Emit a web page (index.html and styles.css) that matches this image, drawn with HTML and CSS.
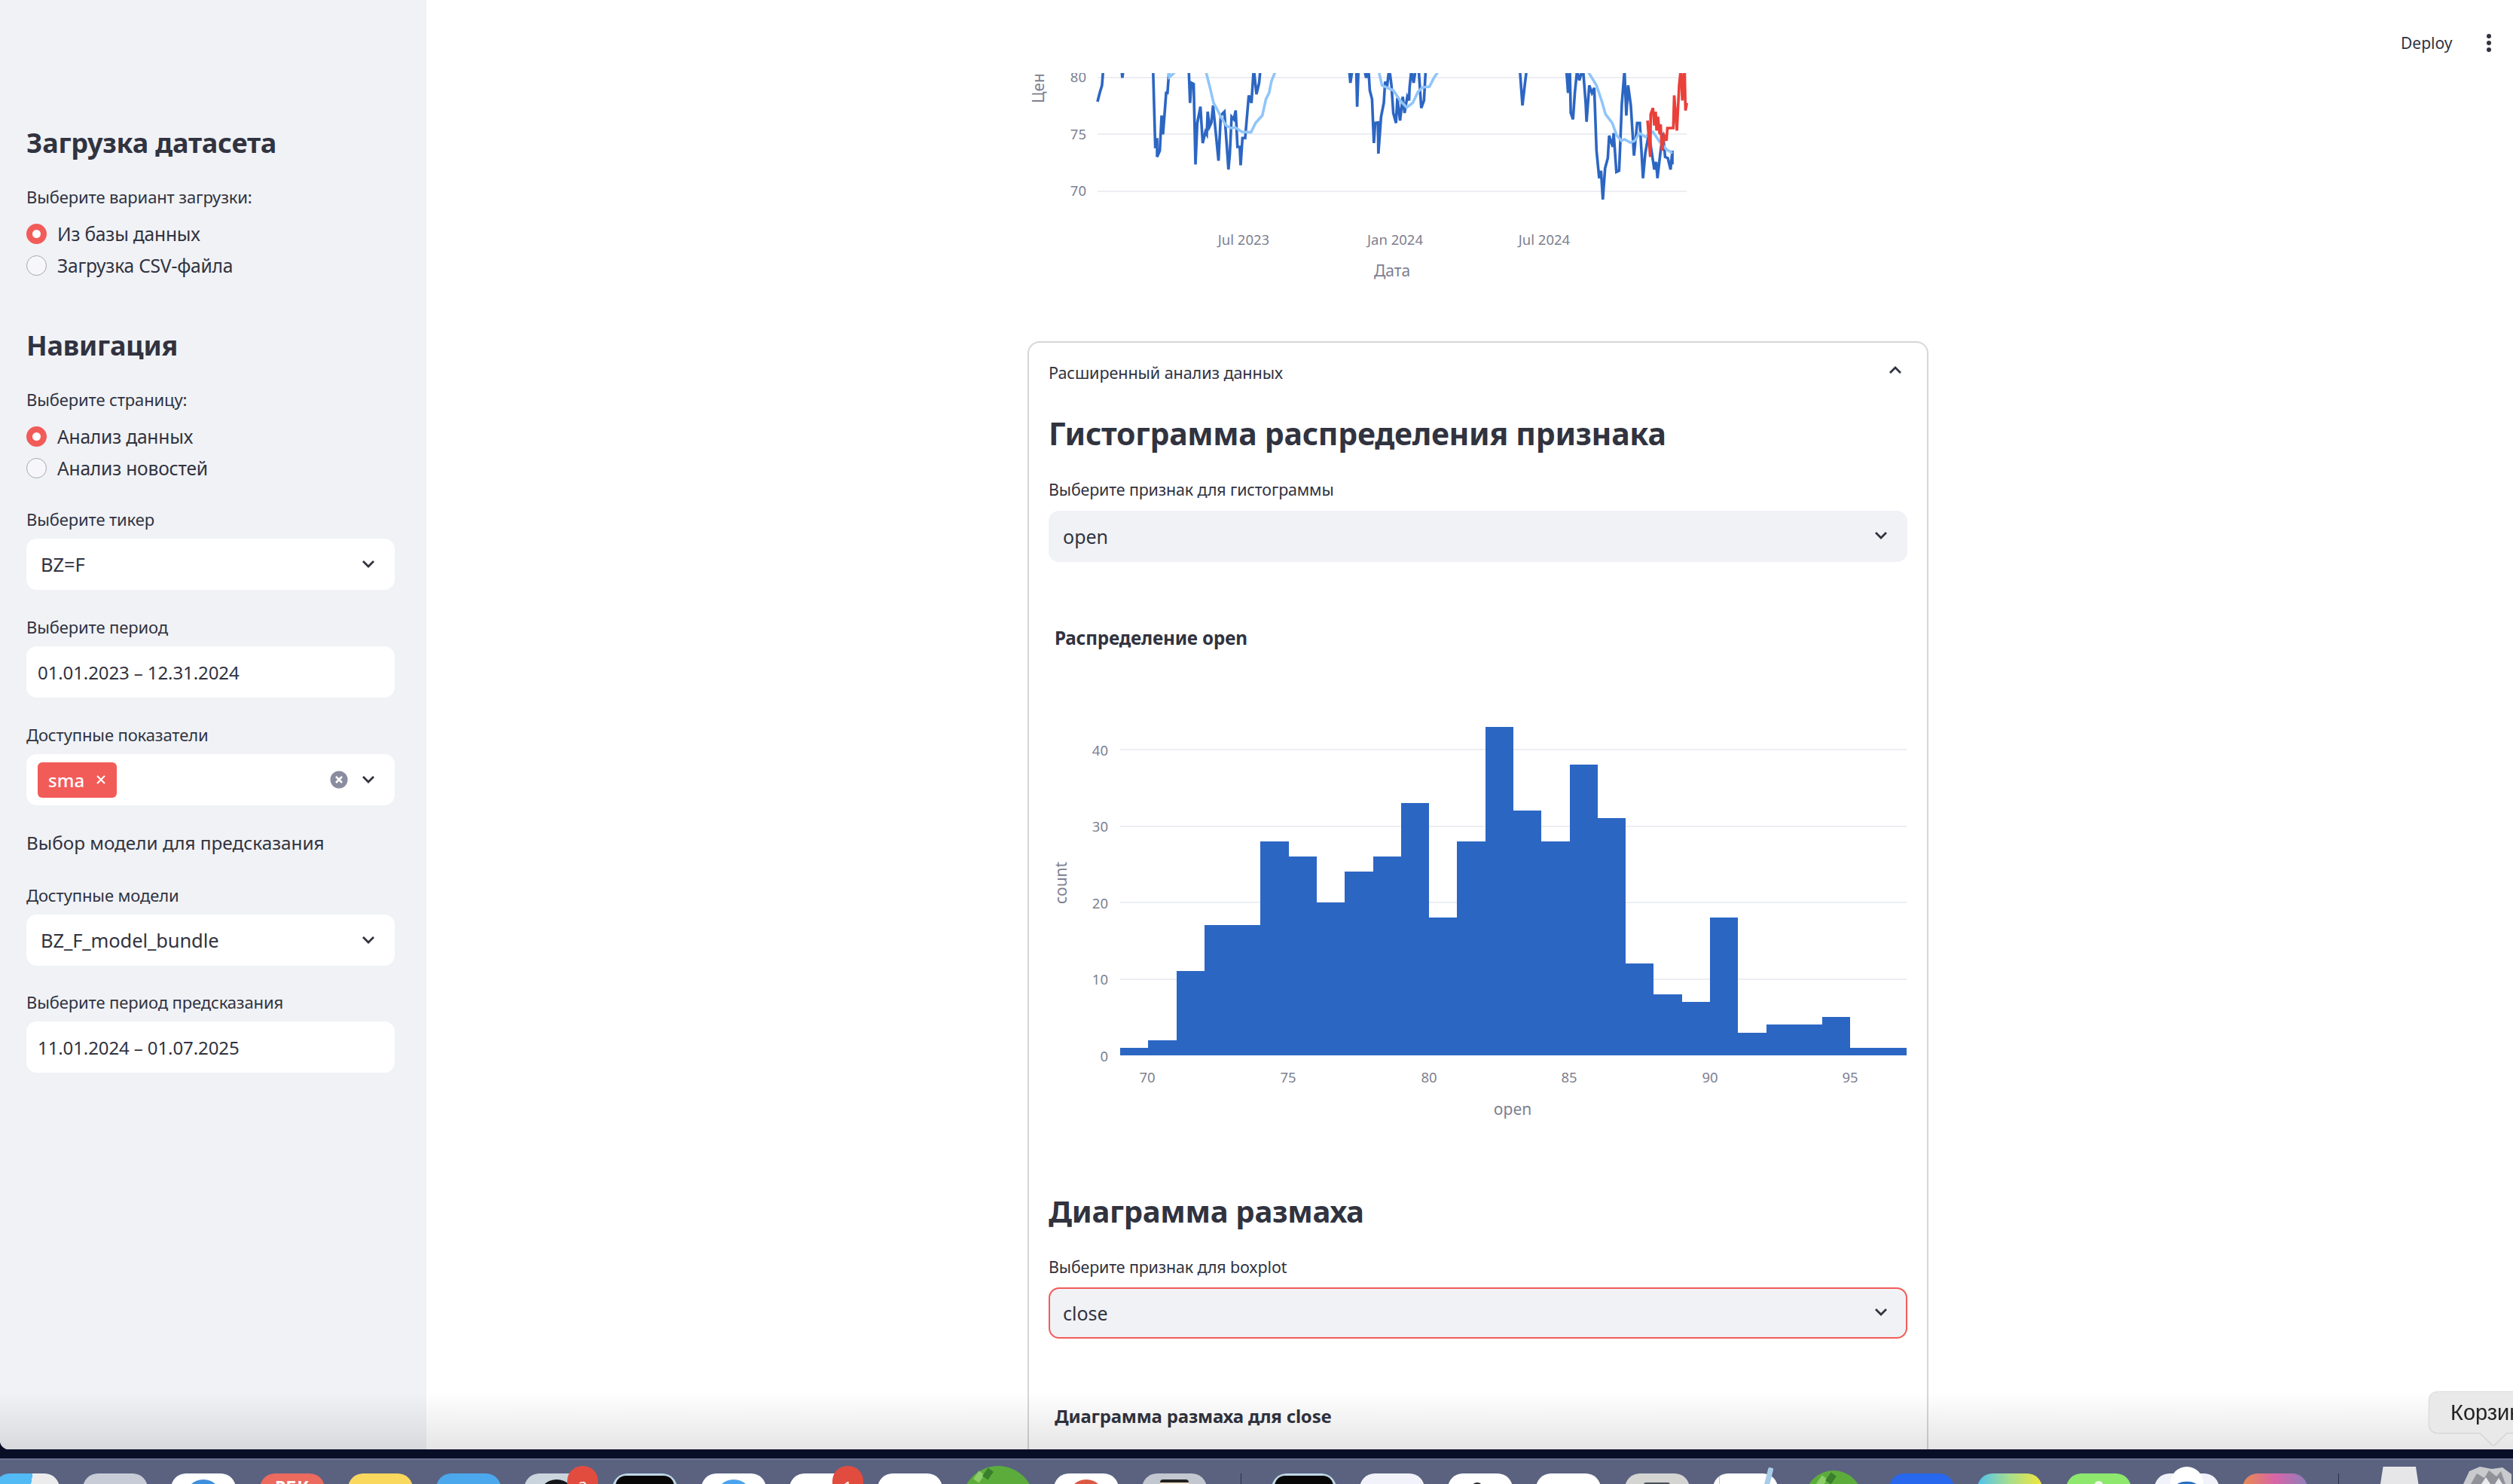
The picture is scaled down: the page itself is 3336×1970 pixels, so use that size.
FILE: index.html
```html
<!DOCTYPE html>
<html lang="ru">
<head>
<meta charset="utf-8">
<title>Анализ данных</title>
<link rel="stylesheet" href="styles.css">
</head>
<body>
<div class="app">
  <aside class="sidebar">
    <h2 class="side-title">Загрузка датасета</h2>
    <div class="label label-radio">Выберите вариант загрузки:</div>
    <div class="radio-row"><span class="radio radio-on"></span><span>Из базы данных</span></div>
    <div class="radio-row"><span class="radio"></span><span>Загрузка CSV-файла</span></div>

    <h2 class="side-title side-title-next">Навигация</h2>
    <div class="label label-radio">Выберите страницу:</div>
    <div class="radio-row"><span class="radio radio-on"></span><span>Анализ данных</span></div>
    <div class="radio-row"><span class="radio"></span><span>Анализ новостей</span></div>

    <div class="field field-first">
      <div class="label">Выберите тикер</div>
      <div class="box box-select"><span>BZ=F</span><svg class="chev" viewBox="0 0 18 12"><path d="M2 2l7 7 7-7"/></svg></div>
    </div>
    <div class="field">
      <div class="label">Выберите период</div>
      <div class="box box-date">01.01.2023 – 12.31.2024</div>
    </div>
    <div class="field">
      <div class="label">Доступные показатели</div>
      <div class="box box-multi">
        <span class="chip"><span>sma</span><svg class="chip-x" viewBox="0 0 14 14"><path d="M2 2l10 10M12 2L2 12"/></svg></span>
        <span class="box-tools">
          <svg class="clear" viewBox="0 0 24 24"><circle cx="12" cy="12" r="11.5"/><path d="M8 8l8 8M16 8l-8 8"/></svg>
          <svg class="chev" viewBox="0 0 18 12"><path d="M2 2l7 7 7-7"/></svg>
        </span>
      </div>
    </div>
    <div class="side-sub">Выбор модели для предсказания</div>
    <div class="field field-model">
      <div class="label">Доступные модели</div>
      <div class="box box-select"><span>BZ_F_model_bundle</span><svg class="chev" viewBox="0 0 18 12"><path d="M2 2l7 7 7-7"/></svg></div>
    </div>
    <div class="field">
      <div class="label">Выберите период предсказания</div>
      <div class="box box-date">11.01.2024 – 01.07.2025</div>
    </div>
  </aside>

  <main class="main">
    <div class="toolbar">
      <span class="deploy">Deploy</span>
      <span class="kebab"><i></i><i></i><i></i></span>
    </div>
    <div class="column">
      <svg class="line-chart" viewBox="0 1 940 289" width="940" height="289">
        <g class="grid">
          <line x1="93" y1="7" x2="875" y2="7"/><line x1="93" y1="82" x2="875" y2="82"/><line x1="93" y1="158" x2="875" y2="158"/>
        </g>
        <g class="tick tick-end">
          <text x="78" y="13">80</text><text x="78" y="89">75</text><text x="78" y="164">70</text>
        </g>
        <text class="axis" transform="translate(22,41) rotate(-90)">Цен</text>
        <g transform="translate(-24,-16) scale(.5995,.3333)" class="traces">
          <polyline class="t-blue" points="195,165 200,130 205,100 208,30"/>
          <polyline class="t-blue" points="248,30 250,70 253,30"/>
          <polyline class="t-blue" points="318,30 323,350 327,310 327,385 333,360 337,220 340,295 345,180 347,130 350,130 354,30"/>
          <polyline class="t-blue" points="397,30 400,170 403,90 408,95 412,415 416,250 423,185 428,330 434,285 437,295 439,205 443,265 447,250 451,180 454,235 463,400 468,220 476,205 485,435 488,375 492,225 497,235 501,200 505,345 510,345 512,418 516,310 522,310 530,140 536,170 541,30 547,135 553,90 556,30"/>
          <polyline class="t-blue" points="752,30 755,90 760,30"/>
          <polyline class="t-blue" points="768,30 770,185 773,30"/>
          <polyline class="t-blue" points="785,30 790,70 795,30 798,120 803,155 807,330 810,250 816,248 817,372 823,225 829,170 832,85 836,110 841,30 846,100 850,210 856,250 859,150 865,240 871,145 875,210 881,145 885,160 886,110 890,40 895,90 900,30"/>
          <polyline class="t-blue" points="906,30 912,190 918,160 922,30"/>
          <polyline class="t-blue" points="1130,30 1136,180 1142,85 1146,30"/>
          <polyline class="t-blue" points="1233,30 1237,130 1241,40 1243,210 1248,235 1252,130 1257,40 1262,80 1270,30 1276,170 1278,245 1284,100 1290,130 1295,110 1300,360 1306,470 1310,440 1314,555 1319,430 1325,390 1328,300 1336,345 1338,290 1344,445 1350,440 1352,360 1356,175 1362,40 1366,220 1370,100 1376,180 1383,380 1390,250 1396,250 1403,470 1408,370 1416,290 1420,340 1428,435 1432,405 1435,470 1441,375 1447,290 1452,385 1458,390 1464,435 1468,360 1468,415"/>
          <polyline class="t-light" points="350,30 354,68 365,50 372,30"/>
          <polyline class="t-light" points="433,30 445,115 452,170 460,195 468,225 480,260 490,270 500,268 515,285 535,287 545,250 560,220 568,155 575,130 580,85 592,30"/>
          <polyline class="t-light" points="816,30 825,100 850,120 865,160 880,188 893,170 905,125 915,108 930,105 940,70 955,30"/>
          <polyline class="t-light" points="1276,30 1300,100 1312,165 1320,215 1335,250 1345,300 1355,320 1362,315 1375,328 1385,320 1395,290 1408,305 1425,285 1440,325 1455,355 1468,370"/>
          <polyline class="t-red" points="1413,240 1419,385 1420,215 1425,190 1428,260 1431,205 1433,280 1436,225 1440,295 1442,255 1445,360 1450,300 1455,320 1457,270 1470,270 1472,140 1478,280 1483,100 1487,30 1490,160 1495,30 1497,200 1500,170"/>
        </g>
        <g class="tick tick-mid">
          <text x="287" y="229">Jul 2023</text><text x="488" y="229">Jan 2024</text><text x="686" y="229">Jul 2024</text>
        </g>
        <text class="axis axis-mid" x="484" y="271">Дата</text>
      </svg>

      <section class="expander">
        <div class="exp-head"><span>Расширенный анализ данных</span>
          <svg class="chev chev-up" viewBox="0 0 18 12"><path d="M2 10l7-7 7 7"/></svg>
        </div>
        <h2 class="section-title">Гистограмма распределения признака</h2>
        <div class="label label-main">Выберите признак для гистограммы</div>
        <div class="box box-main"><span>open</span><svg class="chev" viewBox="0 0 18 12"><path d="M2 2l7 7 7-7"/></svg></div>
        <div class="chart-title">Распределение open</div>
        <svg class="hist" viewBox="0 0 1139 630" width="1139" height="630">
          <g class="grid">
            <line x1="95" y1="128" x2="1139" y2="128"/><line x1="95" y1="230" x2="1139" y2="230"/><line x1="95" y1="331" x2="1139" y2="331"/><line x1="95" y1="433" x2="1139" y2="433"/>
          </g>
          <g class="tick tick-end">
            <text x="79" y="136">40</text><text x="79" y="237">30</text><text x="79" y="339">20</text><text x="79" y="440">10</text><text x="79" y="542">0</text>
          </g>
          <text class="axis axis-mid" transform="translate(24,305) rotate(-90)">count</text>
          <g class="bars" transform="translate(95,534) scale(37.286,-10.15)">
            <rect x="0" width="1" height="1"/><rect x="1" width="1" height="2"/><rect x="2" width="1" height="11"/><rect x="3" width="1" height="17"/><rect x="4" width="1" height="17"/><rect x="5" width="1" height="28"/><rect x="6" width="1" height="26"/><rect x="7" width="1" height="20"/><rect x="8" width="1" height="24"/><rect x="9" width="1" height="26"/><rect x="10" width="1" height="33"/><rect x="11" width="1" height="18"/><rect x="12" width="1" height="28"/><rect x="13" width="1" height="43"/><rect x="14" width="1" height="32"/><rect x="15" width="1" height="28"/><rect x="16" width="1" height="38"/><rect x="17" width="1" height="31"/><rect x="18" width="1" height="12"/><rect x="19" width="1" height="8"/><rect x="20" width="1" height="7"/><rect x="21" width="1" height="18"/><rect x="22" width="1" height="3"/><rect x="23" width="1" height="4"/><rect x="24" width="1" height="4"/><rect x="25" width="1" height="5"/><rect x="26" width="1" height="1"/><rect x="27" width="1" height="1"/>
          </g>
          <g class="tick tick-mid">
            <text x="131" y="570">70</text><text x="318" y="570">75</text><text x="505" y="570">80</text><text x="691" y="570">85</text><text x="878" y="570">90</text><text x="1064" y="570">95</text>
          </g>
          <text class="axis axis-mid" x="616" y="613">open</text>
        </svg>
        <h2 class="section-title section-title-next">Диаграмма размаха</h2>
        <div class="label label-main">Выберите признак для boxplot</div>
        <div class="box box-main box-focus"><span>close</span><svg class="chev" viewBox="0 0 18 12"><path d="M2 2l7 7 7-7"/></svg></div>
        <div class="chart-title chart-title-next">Диаграмма размаха для close</div>
      </section>
    </div>
  </main>
  <div class="bottom-fade"></div>
  <div class="dock-tip"><span>Корзина</span></div>
</div>
<div class="gap-band"></div>
<footer class="dock">
  <span class="ico ico-finder"></span>
  <span class="ico ico-grey"></span>
  <span class="ico ico-white"><i class="dome dome-blue"></i></span>
  <span class="ico ico-rbk">РБК</span>
  <span class="ico ico-yellow"></span>
  <span class="ico ico-sky"></span>
  <span class="ico ico-steel"><i class="dome dome-black"></i><b class="badge">3</b></span>
  <span class="ico ico-monitor"><i></i></span>
  <span class="ico ico-white"><i class="dome dome-sky"></i></span>
  <span class="ico ico-white"><b class="badge">1</b></span>
  <span class="ico ico-white"></span>
  <span class="ico ico-leaf"><i></i><i></i></span>
  <span class="ico ico-white"><i class="dome dome-red"></i></span>
  <span class="ico ico-grey2"><i></i></span>
  <span class="sep sep-a"></span>
  <span class="ico ico-monitor ico-monitor2"><i></i></span>
  <span class="ico ico-lav"></span>
  <span class="ico ico-white"><i class="dot"></i></span>
  <span class="ico ico-white"></span>
  <span class="ico ico-stone"><i></i></span>
  <span class="ico ico-note"><i class="pen"></i></span>
  <span class="ico ico-leaf ico-leaf2"><i></i><i></i></span>
  <span class="ico ico-blue"></span>
  <span class="ico ico-rainbow"></span>
  <span class="ico ico-lime"><i></i></span>
  <span class="ico ico-lav ico-robot"><i></i></span>
  <span class="ico ico-pink"></span>
  <span class="sep sep-b"></span>
  <span class="ico ico-docs"><i></i></span>
  <span class="ico ico-trash"><svg viewBox="0 0 66 23" width="66" height="23"><path class="tr-a" d="M2 23L10 6 24 0l16 3 14-2 12 9v13z"/><path class="tr-b" d="M12 23l8-14 10 6 6-10 10 8 6-7 6 17z"/><path class="tr-c" d="M26 23l6-9 6 9zM44 23l5-8 5 8z"/></svg></span>
</footer>
</body>
</html>
```

FILE: styles.css
```css
* { box-sizing: border-box; }
html, body { margin: 0; padding: 0; height: 100%; overflow: hidden; background: #090e27; }
body { font-family: "Noto Sans", "Open Sans", sans-serif; color: #31333f; display: flex; flex-direction: column; height: 1970px; }

.app { position: relative; height: 1924px; display: flex; overflow: hidden; background: #fff; border-bottom-left-radius: 12px; flex: none; }

/* Sidebar */
.sidebar { width: 566px; flex: none; background: #f0f2f6; padding: 165px 42px 0 35px; }
.side-title { margin: 0; font-size: 36px; line-height: 50px; font-weight: 700; letter-spacing: -.2px; }
.side-title-next { margin-top: 61px; }
.label { font-size: 22px; line-height: 30px; letter-spacing: -.13px; }
.label-radio { margin-top: 31px; margin-bottom: 13px; }
.radio-row { display: flex; align-items: center; height: 42px; gap: 14px; font-size: 24.6px; letter-spacing: -.2px; }
.radio { width: 27px; height: 27px; border-radius: 50%; background: #f7f7fb; border: 1px solid #a4a6b2; flex: none; }
.radio-on { background: #f25c58; border: 8px solid #f25c58; position: relative; }
.radio-on::after { content: ""; display: block; width: 11px; height: 11px; border-radius: 50%; background: #fff; }
.field { margin-bottom: 34px; }
.field-first { margin-top: 32px; }
.field-model { margin-top: 36px; margin-bottom: 33px; }
.field-model .label { margin-bottom: 12px; }
.field .label { margin-bottom: 11px; }
.box { height: 68px; border-radius: 14px; background: #fff; display: flex; align-items: center; font-size: 24px; }
.box-select { padding: 0 26px 0 19px; justify-content: space-between; font-size: 25.5px; letter-spacing: -.1px; }
.box-date { padding: 0 15px; letter-spacing: -.1px; }
.box-multi { padding: 0 26px 0 15px; justify-content: space-between; }
.chip { height: 47px; width: 105px; border-radius: 6px; background: #f25c58; color: #fff; font-weight: 500; display: flex; align-items: center; justify-content: space-between; padding: 0 14px; }
.chip-x { width: 14px; height: 14px; fill: none; stroke: #fff; stroke-width: 2; }
.box-tools { display: flex; align-items: center; gap: 18px; }
.clear { width: 24px; height: 24px; }
.clear circle { fill: #898d9f; }
.clear path { stroke: #fff; stroke-width: 2.5; fill: none; }
.chev { width: 18px; height: 12px; fill: none; stroke: #31333f; stroke-width: 2.8; flex: none; }
.side-sub { font-size: 24.3px; line-height: 36px; margin-top: -2px; }

/* Main */
.main { flex: 1; position: relative; padding: 97px 0 0 798px; overflow: hidden; }
.toolbar { position: absolute; top: 37px; left: 2621px; display: flex; align-items: center; gap: 45px; font-size: 21px; line-height: 40px; }
.kebab { display: flex; flex-direction: column; gap: 3px; }
.kebab i { display: block; width: 6px; height: 6px; border-radius: 50%; background: #31333f; }
.column { width: 1196px; }
.line-chart { display: block; margin-bottom: 67px; }
.grid line { stroke: #eceef3; stroke-width: 2; }
.tick text { font-size: 18.5px; fill: #7d8090; }
.tick-end text { text-anchor: end; }
.tick-mid text { text-anchor: middle; }
.axis { font-size: 21px; fill: #7d8090; }
.axis-mid { text-anchor: middle; }
.traces polyline { fill: none; stroke-width: 3.6; stroke-linejoin: miter; vector-effect: non-scaling-stroke; }
.t-blue { stroke: #2c66c3; }
.t-light { stroke: #90c5f9; }
.t-red { stroke: #ea403a; }
.bars rect { fill: #2c66c3; shape-rendering: crispEdges; }

.expander { border: 2px solid #d6d6d9; border-bottom: 0; border-radius: 16px 16px 0 0; padding: 24px 26px 0 26px; height: 1500px; }
.exp-head { display: flex; justify-content: space-between; align-items: center; height: 30px; font-size: 21.6px; padding-right: 7px; letter-spacing: -.1px; }
.chev-up { margin-top: -6px; }
.section-title { margin: 38px 0 0; font-size: 41px; line-height: 56px; font-weight: 700; letter-spacing: -.3px; }
.section-title-next { margin-top: 83px; font-size: 40px; }
.label-main { margin-top: 32px; margin-bottom: 13px; font-size: 21.4px; }
.box-main { background: #f0f2f6; padding: 0 26px 0 19px; justify-content: space-between; font-size: 25px; }
.box-main .chev { margin-top: -2px; }
.box-focus { border: 2px solid #f25c58; padding: 0 24px 0 17px; }
.section-title-next + .label-main { margin-top: 31px; margin-bottom: 12px; }
.chart-title { margin-top: 83px; padding-left: 8px; font-size: 24.3px; line-height: 36px; font-weight: 700; letter-spacing: -.2px; }
.chart-title-next { margin-top: 85px; font-size: 24px; }
.hist { display: block; margin-top: 2px; }

/* Overlays */
.bottom-fade { position: absolute; left: 0; right: 0; bottom: 0; height: 76px; background: linear-gradient(rgba(0,0,0,0), rgba(0,0,0,.1)); pointer-events: none; }
.dock-tip { position: absolute; left: 3225px; top: 1848px; width: 180px; height: 54px; background: #e9e9ea; border-radius: 10px; font-family: "Liberation Sans", sans-serif; font-size: 29px; line-height: 54px; padding-left: 28px; color: #222; filter: drop-shadow(0 0 1px #a3a3a6); }
.dock-tip::after { content: ""; position: absolute; left: 66px; top: 53px; border-left: 19px solid transparent; border-right: 19px solid transparent; border-top: 18px solid #e9e9ea; }

/* Dock */
.gap-band { height: 12px; flex: none; background: #090e27; }
.dock { height: 34px; flex: none; background: #5a6280; border-top: 2px solid #6a7290; display: flex; align-items: flex-start; gap: 31.2px; overflow: hidden; padding-top: 18px; }
.ico { position: relative; width: 86px; height: 86px; border-radius: 20px; flex: none; display: block; background: #fff; }
.ico:first-child { margin-left: -7px; }
.ico i { position: absolute; display: block; }
.ico-finder { background: linear-gradient(100deg, #52baf5 50%, #ececec 50%); }
.ico-grey { background: #c8ccd7; }
.dome { left: 50%; top: 8px; width: 48px; height: 48px; margin-left: -24px; border-radius: 50%; }
.dome-blue { background: #3f8fdc; }
.dome-sky { background: #4ba3ee; }
.dome-red { background: #dc5843; }
.dome-black { background: #15161a; }
.ico-rbk { background: #ec6a5e; color: #fff; font-size: 23px; font-weight: 700; line-height: 30px; padding-top: 3px; text-align: center; }
.ico-yellow { background: #fad85e; }
.ico-sky { background: #4ca8ec; }
.ico-steel { background: #c9d4dd; }
.badge { position: absolute; right: -12px; top: -10px; width: 41px; height: 52px; border-radius: 20px; background: #e24c3f; color: #fff; font-size: 20px; font-weight: 400; text-align: center; line-height: 46px; padding-top: 5px; }
.ico-monitor { background: #bfd8e6; }
.ico-monitor i { left: 4px; right: 4px; top: 3px; bottom: 0; border-radius: 14px 14px 0 0; background: #080808; }
.ico-leaf { background: #5cac3c; border-radius: 50%; width: 96px; margin: -10px -5px 0 -5px; height: 96px; }
.ico-leaf i { width: 9px; height: 13px; background: #8ccf68; transform: rotate(35deg); left: 18px; top: 8px; }
.ico-leaf i + i { left: 30px; top: 4px; background: #3a7f2b; }
.ico-leaf2 { width: 76px; margin: -4px 5px 0 5px; height: 76px; }
.ico-grey2 { background: #c3c7d0; }
.ico-grey2 i { left: 24px; top: 8px; width: 38px; height: 24px; background: #efe3cf; border-radius: 4px; border-top: 4px solid #222; }
.sep { width: 1px; height: 16px; background: #2a2f45; flex: none; margin-top: 0; }
.sep-a { margin-left: 13px; margin-right: 9px; }
.sep-b { margin-left: 10px; margin-right: 8px; }
.ico-lav { background: #f1f2fa; }
.dot { left: 31px; top: 12px; width: 16px; height: 16px; border-radius: 50%; background: #25262c; }
.ico-stone { background: #d4d4d2; }
.ico-stone i { left: 25px; top: 12px; width: 35px; height: 30px; background: #4a5058; border-radius: 3px; }
.ico-note { background: linear-gradient(90deg, #fff 8px, #f3b9b4 8px, #f3b9b4 9px, #fff 9px); overflow: visible; }
.pen { left: 70px; top: -8px; width: 7px; height: 30px; background: #a8cbe8; transform: rotate(14deg); border-radius: 2px 2px 0 0; }
.ico-blue { background: #2768ee; }
.ico-rainbow { background: linear-gradient(90deg, #4ec2f0, #a8dd8c, #f2e63c); }
.ico-lime { background: #8ee86e; }
.ico-lime i { left: 37px; top: 10px; width: 12px; height: 12px; border-radius: 50%; background: #eef9e8; }
.ico-robot i { left: 21px; top: -9px; width: 44px; height: 44px; border-radius: 50%; background: radial-gradient(ellipse 16px 8px at 50% 62%, #2a6fc4 90%, #fff 100%); }
.ico-pink { background: linear-gradient(90deg, #e98a4e, #d865a8, #8d7fb9); }
.ico-docs { background: transparent; }
.ico-docs i { left: 10px; top: -9px; width: 62px; height: 60px; background: #e6e6e8; clip-path: polygon(15% 0, 85% 0, 100% 100%, 0 100%); }
.ico-trash { background: transparent; border-radius: 0; overflow: visible; }
.ico-trash svg { position: absolute; left: 7px; top: -9px; }
.tr-a { fill: #c8cace; }
.tr-b { fill: #8f9299; }
.tr-c { fill: #e9ebee; }
```
